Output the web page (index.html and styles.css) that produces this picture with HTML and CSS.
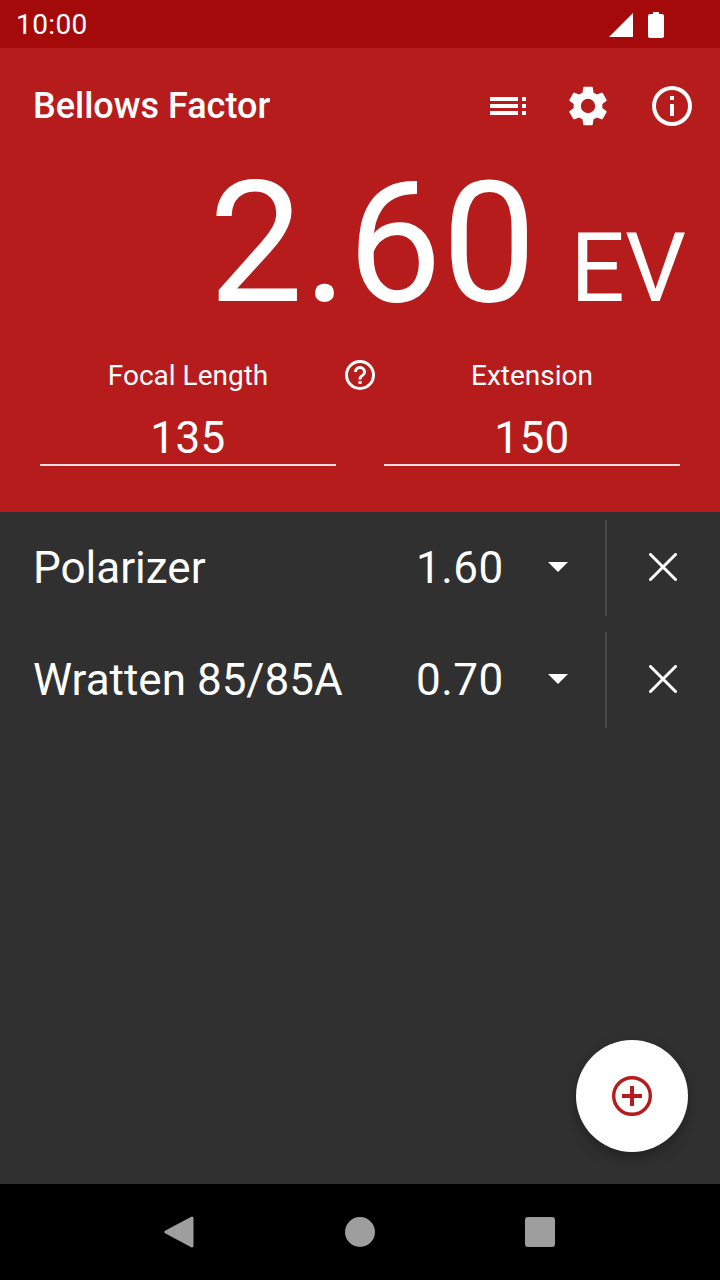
FILE: index.html
```html
<!DOCTYPE html>
<html lang="en">
<head>
<meta charset="utf-8">
<title>Bellows Factor</title>
<link rel="stylesheet" href="styles.css">
</head>
<body>
<div class="app">
  <div class="status">
    <span class="clock">10:00</span>
    <div class="status-icons">
      <svg class="sig" width="24" height="24" viewBox="0 0 24 24"><path d="M0 24 24 0v24z" fill="#fff"/></svg>
      <svg class="bat" width="16" height="26" viewBox="0 0 16 26"><path d="M5 0h6v2h3a2 2 0 0 1 2 2v20a2 2 0 0 1-2 2H2a2 2 0 0 1-2-2V4a2 2 0 0 1 2-2h3z" fill="#fff"/></svg>
    </div>
  </div>
  <header class="head">
    <div class="bar">
      <h1 class="title">Bellows Factor</h1>
      <div class="actions">
        <svg class="ic" width="40" height="24" viewBox="0 0 40 24"><path d="M2 3h28v4H2zM2 10h28v4H2zM2 17h28v4H2zM34 3h4v4h-4zM34 10h4v4h-4zM34 17h4v4h-4z" fill="#fff"/></svg>
        <svg class="ic gear" width="48" height="48" viewBox="0 0 24 24"><path fill="#fff" d="M19.14 12.94c.04-.3.06-.61.06-.94 0-.32-.02-.64-.07-.94l2.03-1.58a.49.49 0 0 0 .12-.61l-1.92-3.32a.488.488 0 0 0-.59-.22l-2.39.96c-.5-.38-1.03-.7-1.62-.94l-.36-2.54a.484.484 0 0 0-.48-.41h-3.84c-.24 0-.43.17-.47.41l-.36 2.54c-.59.24-1.13.57-1.62.94l-2.39-.96c-.22-.08-.47 0-.59.22L2.74 8.87c-.12.21-.08.47.12.61l2.03 1.58c-.05.3-.09.63-.09.94s.02.64.07.94l-2.03 1.58a.49.49 0 0 0-.12.61l1.92 3.32c.12.22.37.29.59.22l2.39-.96c.5.38 1.03.7 1.62.94l.36 2.54c.05.24.24.41.48.41h3.84c.24 0 .44-.17.47-.41l.36-2.54c.59-.24 1.13-.56 1.62-.94l2.39.96c.22.08.47 0 .59-.22l1.92-3.32c.12-.22.07-.47-.12-.61l-2.01-1.58zM12 15.6A3.6 3.6 0 1 1 12 8.4a3.6 3.6 0 0 1 0 7.2z"/></svg>
        <svg class="ic" width="48" height="48" viewBox="0 0 24 24"><path fill="#fff" d="M11 7h2v2h-2zm0 4h2v6h-2zm1-9a10 10 0 1 0 0 20 10 10 0 0 0 0-20zm0 18a8 8 0 1 1 0-16 8 8 0 0 1 0 16z"/></svg>
      </div>
    </div>
    <div class="reading">
      <span class="value">2.60</span>
      <span class="unit">EV</span>
    </div>
    <div class="fields">
      <div class="field">
        <div class="field-label">Focal Length</div>
        <div class="field-input">135</div>
        <svg class="help" width="36" height="36" viewBox="0 0 24 24"><path fill="#fff" d="M11 18h2v-2h-2v2zm1-16a10 10 0 1 0 0 20 10 10 0 0 0 0-20zm0 18a8 8 0 1 1 0-16 8 8 0 0 1 0 16zm0-14a4 4 0 0 0-4 4h2a2 2 0 0 1 4 0c0 2-3 1.75-3 5h2c0-2.25 3-2.5 3-5a4 4 0 0 0-4-4z"/></svg>
      </div>
      <div class="field">
        <div class="field-label">Extension</div>
        <div class="field-input">150</div>
      </div>
    </div>
  </header>
  <main class="list">
    <div class="row">
      <span class="name">Polarizer</span>
      <span class="num">1.60</span>
      <svg class="caret" width="20" height="10" viewBox="0 0 20 10"><path d="M0 0h20L10 10z" fill="#fff"/></svg>
      <span class="rule"></span>
      <svg class="close" width="28" height="28" viewBox="0 0 28 28"><path d="M1.5 1.5l25 25M26.5 1.5l-25 25" stroke="#fff" stroke-width="3" stroke-linecap="round"/></svg>
    </div>
    <div class="row">
      <span class="name">Wratten 85/85A</span>
      <span class="num">0.70</span>
      <svg class="caret" width="20" height="10" viewBox="0 0 20 10"><path d="M0 0h20L10 10z" fill="#fff"/></svg>
      <span class="rule"></span>
      <svg class="close" width="28" height="28" viewBox="0 0 28 28"><path d="M1.5 1.5l25 25M26.5 1.5l-25 25" stroke="#fff" stroke-width="3" stroke-linecap="round"/></svg>
    </div>
    <button class="fab" type="button" aria-label="Add">
      <svg width="40" height="40" viewBox="0 0 40 40"><circle cx="20" cy="20" r="18.3" fill="none" stroke="#b71c1c" stroke-width="3.4"/><path d="M18 10h4v8h8v4h-8v8h-4v-8h-8v-4h8z" fill="#b71c1c"/></svg>
    </button>
  </main>
  <nav class="nav">
    <svg width="30" height="32" viewBox="0 0 30 32"><path d="M28 0.5a1.5 1.5 0 0 1 1.5 1.5v28a1.5 1.5 0 0 1-2.2 1.3L1 17.2a1.4 1.4 0 0 1 0-2.4L27.3.7z" fill="#9e9e9e"/></svg>
    <span class="home"></span>
    <span class="recent"></span>
  </nav>
</div>
</body>
</html>
```

FILE: styles.css
```css
* { box-sizing: border-box; }
html, body { margin: 0; padding: 0; }
body { font-family: Roboto, "Liberation Sans", sans-serif; color: #fff; background: #303030; }
.app { width: 720px; height: 1280px; display: flex; flex-direction: column; overflow: hidden; }

.status { height: 48px; flex: none; background: #a50a0a; display: flex; align-items: center; justify-content: space-between; padding: 0 56px 0 16px; }
.clock { font-size: 28px; letter-spacing: 0.4px; color: #fff; }
.status-icons { display: flex; align-items: center; gap: 15px; padding-top: 2px; }
.sig, .bat { display: block; }

.head { height: 464px; flex: none; background: #b71c1c; display: flex; flex-direction: column; }
.bar { height: 116px; flex: none; display: flex; align-items: center; justify-content: space-between; padding: 0 24px 0 33px; }
.title { margin: 0; font-size: 36px; font-weight: 500; line-height: 116px; }
.actions { display: flex; align-items: center; gap: 36px; }
.ic { display: block; }
.reading { height: 160px; flex: none; display: flex; align-items: baseline; justify-content: flex-end; padding-right: 34px; gap: 34px; line-height: 160px; }
.value { font-size: 168px; }
.unit { font-size: 96px; }
.fields { display: flex; gap: 48px; padding: 0 40px; margin-top: 28px; }
.field { position: relative; flex: 1; text-align: center; }
.field-label { font-size: 28px; line-height: 48px; color: #fff; padding-right: 0; }
.field-input { height: 56px; margin-top: 10px; font-size: 44px; line-height: 56px; border-bottom: 2px solid #f4dcdc; letter-spacing: 0.5px; }
.help { position: absolute; top: 5px; right: -42px; display: block; }

.list { position: relative; flex: 1; background: #303030; padding-top: 8px; display: flex; flex-direction: column; gap: 16px; }
.row { height: 96px; display: flex; align-items: center; padding-left: 33px; }
.name { width: 383px; font-size: 44px; }
.num { width: 132px; font-size: 44px; letter-spacing: 0.5px; }
.caret { display: block; margin-top: -2px; }
.rule { width: 2px; height: 96px; background: #4a4a4a; margin-left: 37px; }
.close { display: block; margin-left: 42px; margin-top: -2px; }
.fab { position: absolute; right: 32px; bottom: 32px; width: 112px; height: 112px; border: 0; padding: 0; border-radius: 50%; background: #fff; display: flex; align-items: center; justify-content: center; box-shadow: 0 6px 14px rgba(0,0,0,.3); }

.nav { height: 96px; flex: none; background: #000; display: flex; align-items: center; padding-left: 164px; }
.home { width: 30px; height: 30px; border-radius: 50%; background: #9e9e9e; margin-left: 151px; }
.recent { width: 30px; height: 30px; border-radius: 3px; background: #9e9e9e; margin-left: 150px; }
```
